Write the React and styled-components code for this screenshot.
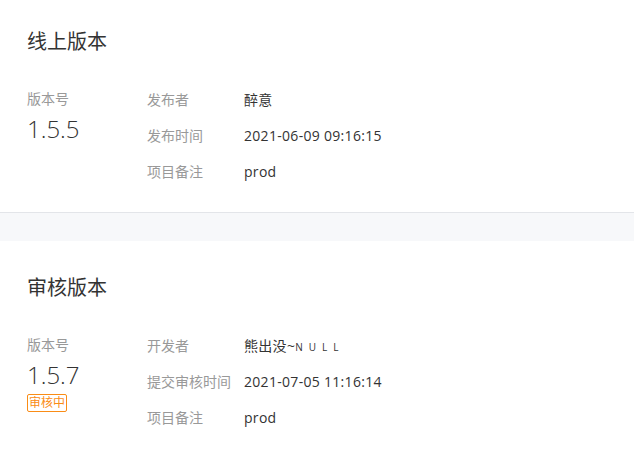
import React from 'react';
import styled, { createGlobalStyle } from 'styled-components';

const GlobalStyle = createGlobalStyle`
  html, body {
    margin: 0;
    padding: 0;
    background: #fff;
    font-family: 'Open Sans', 'Noto Sans CJK SC', sans-serif;
    color: #333;
  }
`;

const Page = styled.div`
  width: 634px;
`;

const Card = styled.section`
  background: #fff;
  padding: ${({ $top }) => $top}px 27px 23px;
  border-bottom: ${({ $divider }) => ($divider ? '1px solid #e3e5e9' : 'none')};
`;

const Band = styled.div`
  height: 28px;
  background: #f7f8fa;
`;

const Title = styled.h2`
  margin: 0 0 25px;
  font-size: 20px;
  line-height: 28px;
  font-weight: 400;
  color: #333;
`;

const Body = styled.div`
  display: flex;
`;

const VersionCol = styled.div`
  width: 120px;
  flex-shrink: 0;
`;

const Label = styled.div`
  font-size: 14px;
  line-height: 36px;
  color: #999;
`;

const VersionNo = styled.div`
  font-size: 24px;
  line-height: 24px;
  font-weight: 300;
  color: #333;
`;

const Tag = styled.span`
  display: inline-block;
  margin-top: 7px;
  padding: 0 1px;
  border: 1px solid #fa8c16;
  border-radius: 2px;
  font-size: 12px;
  line-height: 16px;
  color: #fa8c16;
`;

const Info = styled.dl`
  margin: 0;
  display: grid;
  grid-template-columns: 97px auto;
  grid-auto-rows: 36px;
  align-items: center;
  font-size: 14px;
`;

const Term = styled.dt`
  color: #999;
`;

const Value = styled.dd`
  margin: 0;
  color: #333;
  letter-spacing: 0.3px;
`;

const Small = styled.span`
  font-size: 10px;
  letter-spacing: 6px;
`;

const releases = [
  {
    title: '线上版本',
    version: '1.5.5',
    top: 28,
    divider: true,
    rows: [
      ['发布者', '醉意'],
      ['发布时间', '2021-06-09 09:16:15'],
      ['项目备注', 'prod'],
    ],
  },
  {
    title: '审核版本',
    version: '1.5.7',
    top: 33,
    status: '审核中',
    rows: [
      ['开发者', <>熊出没~<Small>NULL</Small></>],
      ['提交审核时间', '2021-07-05 11:16:14'],
      ['项目备注', 'prod'],
    ],
  },
];

const App = () => (
  <Page>
    <GlobalStyle />
    {releases.map((r, i) => (
      <React.Fragment key={r.title}>
        {i > 0 && <Band />}
        <Card $top={r.top} $divider={r.divider}>
          <Title>{r.title}</Title>
          <Body>
            <VersionCol>
              <Label>版本号</Label>
              <VersionNo>{r.version}</VersionNo>
              {r.status && <Tag>{r.status}</Tag>}
            </VersionCol>
            <Info>
              {r.rows.map(([k, v]) => (
                <React.Fragment key={k}>
                  <Term>{k}</Term>
                  <Value>{v}</Value>
                </React.Fragment>
              ))}
            </Info>
          </Body>
        </Card>
      </React.Fragment>
    ))}
  </Page>
);

export default App;
